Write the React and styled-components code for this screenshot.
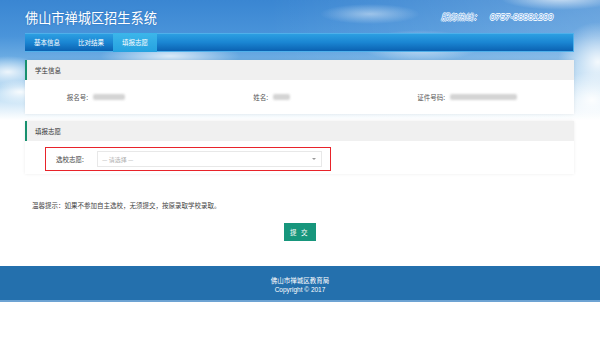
import React from "react";
import styled, { createGlobalStyle } from "styled-components";

const GlobalStyle = createGlobalStyle`
  html, body { margin: 0; padding: 0; background: #fff; }
  body {
    font-family: "Liberation Sans", "Noto Sans CJK SC", sans-serif;
    width: 600px;
    height: 353px;
    overflow: hidden;
  }
  * { box-sizing: border-box; }
`;

const Page = styled.div`
  width: 600px;
  min-height: 353px;
  background:
    radial-gradient(ellipse 38px 16px at 8px 72px, rgba(255,255,255,0.85), rgba(255,255,255,0) 100%),
    radial-gradient(ellipse 30px 12px at 20px 92px, rgba(255,255,255,0.9), rgba(255,255,255,0) 100%),
    radial-gradient(ellipse 70px 14px at 170px 56px, rgba(255,255,255,0.75), rgba(255,255,255,0) 100%),
    radial-gradient(ellipse 50px 10px at 370px 14px, rgba(255,255,255,0.45), rgba(255,255,255,0) 100%),
    radial-gradient(ellipse 60px 16px at 420px 46px, rgba(255,255,255,0.65), rgba(255,255,255,0) 100%),
    radial-gradient(ellipse 60px 12px at 560px -2px, rgba(255,255,255,0.7), rgba(255,255,255,0) 100%),
    radial-gradient(ellipse 40px 40px at 598px 62px, rgba(255,255,255,0.9), rgba(255,255,255,0) 100%),
    radial-gradient(ellipse 40px 28px at 592px 100px, rgba(255,255,255,0.95), rgba(255,255,255,0) 100%),
    linear-gradient(90deg, rgba(255,255,255,0) 45%, rgba(255,255,255,0.22) 100%),
    linear-gradient(180deg, #3a86d2 0%, #4a94da 30%, #78b5e6 55%, #b8dbf4 78%, #ffffff 100%);
  background-size: 100% 120px;
  background-repeat: no-repeat;
`;

const Container = styled.div`
  margin: 0 26px 0 25px;
`;

const Header = styled.div`
  height: 33px;
  display: flex;
  justify-content: space-between;
  align-items: flex-start;
  padding-top: 9px;
`;

const Title = styled.h1`
  margin: 0;
  font-family: "Noto Sans CJK SC", sans-serif;
  font-weight: 400;
  font-size: 13.2px;
  line-height: 17px;
  color: #fff;
  text-shadow: 0 0 2px rgba(0, 60, 140, 0.35);
`;

const Hotline = styled.div`
  margin-top: 3px;
  margin-right: 21px;
  font-size: 8px;
  line-height: 10px;
  font-style: italic;
  color: #6aaaea;
  text-shadow: 0.7px 0 0 #fff, -0.7px 0 0 #fff, 0 0.7px 0 #fff, 0 -0.7px 0 #fff;
  white-space: nowrap;

  span {
    font-family: "Liberation Sans", sans-serif;
    font-size: 9px;
    margin-left: 9px;
  }
`;

const Nav = styled.nav`
  height: 19px;
  display: flex;
  background: linear-gradient(180deg, #2c9fe2 0%, #1a85d2 50%, #0b62b2 100%);
  border: 1px solid #4fb0ea;
  border-left: none;
`;

const NavItem = styled.a`
  display: block;
  padding: 0 9px;
  margin-top: -1px;
  height: 19px;
  line-height: 19px;
  font-size: 6.5px;
  color: #fff;
  text-decoration: none;
  font-family: "Noto Sans CJK SC", sans-serif;
  background: ${(p) =>
    p.$active ? "linear-gradient(180deg, #3cb6ea 0%, #25a2e0 100%)" : "transparent"};
`;

const Panel = styled.section`
  margin-top: ${(p) => p.$gap}px;
  background: #fff;
  box-shadow: 0 0 3px rgba(0, 0, 0, 0.08);
`;

const PanelHeader = styled.div`
  height: 20px;
  line-height: 20px;
  background: #f0f0f0;
  border-left: 2px solid #17906e;
  padding-left: 8px;
  font-size: 6.5px;
  color: #333;
  font-family: "Noto Sans CJK SC", sans-serif;
`;

const InfoGrid = styled.div`
  height: 34px;
  display: grid;
  grid-template-columns: repeat(3, 1fr);
  align-items: center;
`;

const Field = styled.div`
  display: flex;
  align-items: center;
`;

const Label = styled.span`
  width: ${(p) => p.$w}px;
  text-align: right;
  font-size: 6.5px;
  color: #555;
  font-family: "Noto Sans CJK SC", sans-serif;
`;

const Blurred = styled.span`
  display: block;
  width: ${(p) => p.$w}px;
  height: 6px;
  margin-left: 5px;
  background: #d4d4d4;
  border-radius: 2px;
  filter: blur(1.2px);
`;

const ChoiceBody = styled.div`
  height: 33px;
  padding: 6px 0 0 20px;
`;

const Highlight = styled.div`
  width: 286px;
  height: 24px;
  border: 1.3px solid #e8232a;
  display: flex;
  align-items: center;
  padding: 0 8px 0 10px;
`;

const ChoiceLabel = styled.span`
  width: 41px;
  font-size: 6.5px;
  color: #444;
  font-family: "Noto Sans CJK SC", sans-serif;
`;

const Select = styled.div`
  flex: 1;
  height: 16px;
  border: 1px solid #e8e8e8;
  background: #fff;
  display: flex;
  align-items: center;
  justify-content: space-between;
  padding: 0 5px 0 4px;
  font-size: 6px;
  color: #b0b0b0;
  font-family: "Noto Sans CJK SC", sans-serif;
`;

const Caret = styled.span`
  width: 0;
  height: 0;
  border-left: 2.5px solid transparent;
  border-right: 2.5px solid transparent;
  border-top: 2.5px solid #999;
`;

const Tip = styled.p`
  margin: 26px 0 0;
  padding-left: 7px;
  font-size: 6.5px;
  line-height: 10px;
  color: #444;
  font-family: "Noto Sans CJK SC", sans-serif;
`;

const Actions = styled.div`
  display: flex;
  justify-content: center;
  margin-top: 13px;
`;

const SubmitButton = styled.button`
  width: 32px;
  height: 18px;
  border: none;
  padding: 0;
  background: #17967c;
  color: #fff;
  font-size: 6.5px;
  font-family: "Noto Sans CJK SC", sans-serif;
  letter-spacing: 1.5px;
  cursor: pointer;
`;

const Footer = styled.footer`
  margin-top: 25px;
  height: 36px;
  background: #2470ad;
  border-bottom: 2px solid #6da3d3;
  padding-top: 10px;
  text-align: center;
  color: #fff;
  font-size: 6.5px;
  line-height: 9px;
`;

const FooterLine = styled.div``;

export default function App() {
  return (
    <>
      <GlobalStyle />
      <Page>
        <Container>
          <Header>
            <Title>佛山市禅城区招生系统</Title>
            <Hotline>
              服务热线：<span>0757-88881200</span>
            </Hotline>
          </Header>
          <Nav>
            <NavItem href="#">基本信息</NavItem>
            <NavItem href="#">比对结果</NavItem>
            <NavItem href="#" $active>
              填报志愿
            </NavItem>
          </Nav>

          <Panel $gap={8}>
            <PanelHeader>学生信息</PanelHeader>
            <InfoGrid>
              <Field>
                <Label $w={63}>报名号:</Label>
                <Blurred $w={32} />
              </Field>
              <Field>
                <Label $w={60}>姓名:</Label>
                <Blurred $w={17} />
              </Field>
              <Field>
                <Label $w={54}>证件号码:</Label>
                <Blurred $w={67} />
              </Field>
            </InfoGrid>
          </Panel>

          <Panel $gap={7}>
            <PanelHeader>填报志愿</PanelHeader>
            <ChoiceBody>
              <Highlight>
                <ChoiceLabel>选校志愿:</ChoiceLabel>
                <Select>
                  <span>— 请选择 —</span>
                  <Caret />
                </Select>
              </Highlight>
            </ChoiceBody>
          </Panel>

          <Tip>温馨提示：如果不参加自主选校，无须提交，按原录取学校录取。</Tip>
          <Actions>
            <SubmitButton>提 交</SubmitButton>
          </Actions>
        </Container>
        <Footer>
          <FooterLine>佛山市禅城区教育局</FooterLine>
          <FooterLine>Copyright © 2017</FooterLine>
        </Footer>
      </Page>
    </>
  );
}
